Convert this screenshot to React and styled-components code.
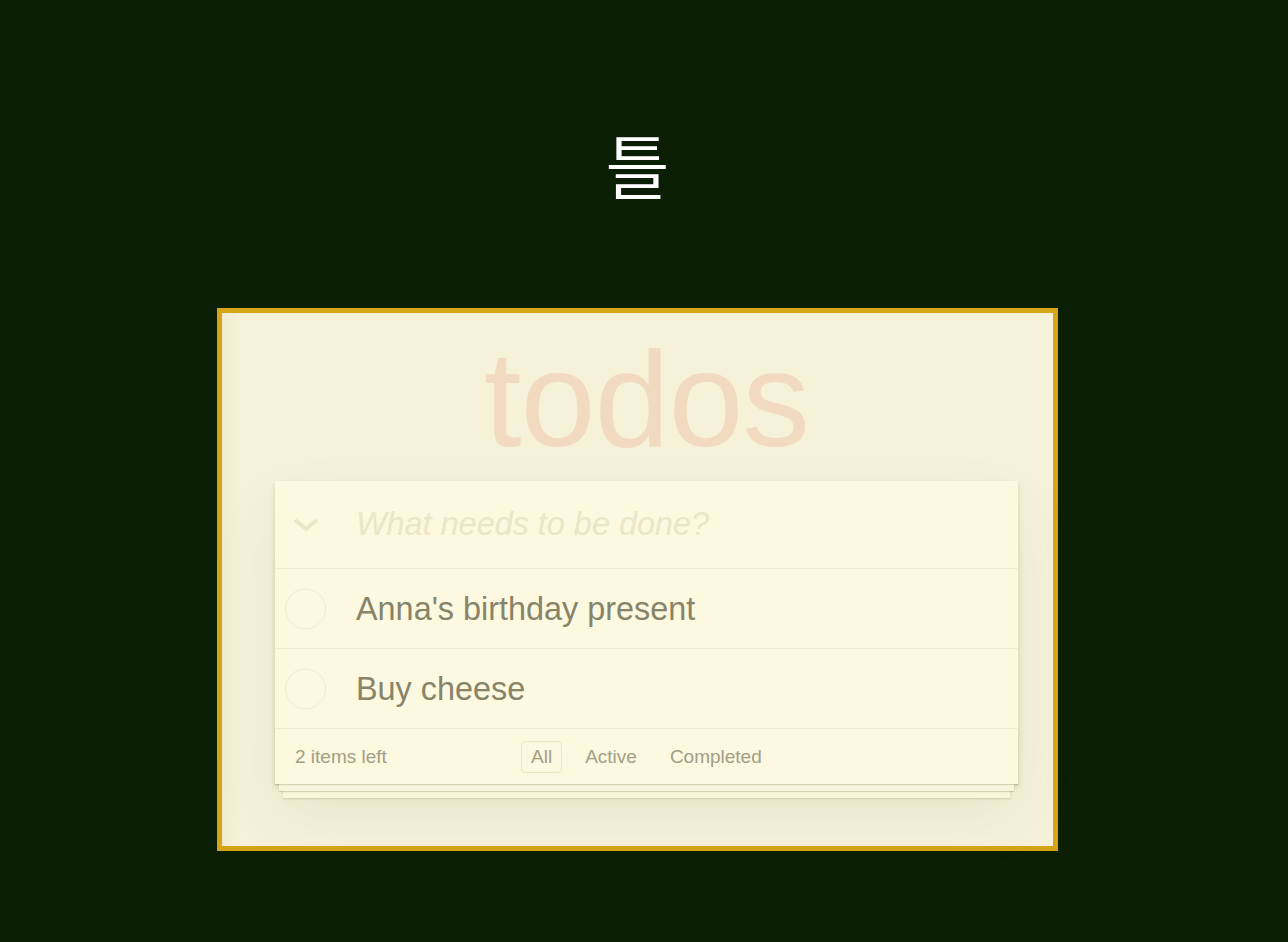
import React from 'react';
import styled, { createGlobalStyle } from 'styled-components';

const GlobalStyle = createGlobalStyle`
  html, body {
    margin: 0;
    padding: 0;
    background: #0b1f06;
  }
  body {
    font-family: "Liberation Sans", Arial, sans-serif;
  }
`;

const Page = styled.div`
  min-height: 942px;
  box-sizing: border-box;
  padding-right: 13px;
  display: flex;
  flex-direction: column;
  align-items: center;
`;

const Title = styled.div`
  margin-top: 116px;
  height: 98px;
  font-family: "Noto Sans CJK KR", "Noto Sans", sans-serif;
  font-size: 70px;
  line-height: 96px;
  font-weight: 350;
  color: #ffffff;
`;

const Frame = styled.div`
  margin-top: 94px;
  width: 841px;
  box-sizing: border-box;
  border: 5px solid #d6a517;
  background: #f6f2da;
  box-shadow: inset 14px 0 14px -10px rgba(120, 100, 40, 0.08);
  padding: 19px 35px 62px 53px;
`;

const Logo = styled.h1`
  margin: 0 0 14px;
  font-size: 135px;
  line-height: 135px;
  font-weight: 400;
  text-align: center;
  color: rgba(236, 198, 172, 0.55);
  letter-spacing: -1px;
`;

const Card = styled.section`
  position: relative;
  isolation: isolate;
  background: #fdf8e0;
  box-shadow: 0 3px 5px rgba(80, 70, 20, 0.18), 0 30px 60px rgba(80, 70, 20, 0.08);
`;

const Header = styled.div`
  position: relative;
  display: flex;
  align-items: center;
  height: 87px;
  padding-left: 81px;
  border-bottom: 1px solid #efead2;
`;

const ToggleAll = styled.span`
  position: absolute;
  left: 18px;
  top: 37px;
  width: 26px;
  height: 14px;
`;

const Placeholder = styled.span`
  font-size: 32.4px;
  font-style: italic;
  color: #ebe6c8;
`;

const Item = styled.div`
  position: relative;
  display: flex;
  align-items: center;
  box-sizing: border-box;
  height: 80px;
  padding-left: 81px;
  padding-top: 2px;
  border-bottom: 1px solid #efead2;
  font-size: 32.4px;
  color: #878469;
`;

const Check = styled.span`
  position: absolute;
  left: 10px;
  top: 50%;
  transform: translateY(-50%);
  width: 39px;
  height: 39px;
  border: 1px solid #efead3;
  border-radius: 50%;
`;

const Footer = styled.footer`
  position: relative;
  display: flex;
  align-items: center;
  height: 55px;
  padding: 0 20px;
  font-size: 19px;
  color: #a29f86;

  &::before {
    content: '';
    position: absolute;
    left: 0;
    right: 0;
    bottom: 0;
    height: 55px;
    overflow: hidden;
    z-index: -1;
    box-shadow: 0 1px 1px rgba(80, 70, 20, 0.2),
      0 11px 0 -4px #f9f4dc,
      0 12px 1px -4px rgba(80, 70, 20, 0.2),
      0 22px 0 -8px #f9f4dc,
      0 23px 2px -8px rgba(80, 70, 20, 0.2);
  }
`;

const Count = styled.span`
  flex: 0 0 auto;
`;

const Filters = styled.div`
  position: absolute;
  left: 246px;
  display: flex;
  gap: 13px;
`;

const Filter = styled.span`
  padding: 4px 9px;
  border: 1px solid ${p => (p.$selected ? '#f2e5c2' : 'transparent')};
  border-radius: 4px;
`;

function App() {
  return (
    <>
      <GlobalStyle />
      <Page>
        <Title>틀</Title>
        <Frame>
          <Logo>todos</Logo>
          <Card>
            <Header>
              <ToggleAll>
                <svg width="26" height="14" viewBox="0 0 26 14">
                  <path d="M2 2 L13 11 L24 2" fill="none" stroke="#ebe6c8" strokeWidth="4" />
                </svg>
              </ToggleAll>
              <Placeholder>What needs to be done?</Placeholder>
            </Header>
            <Item>
              <Check />
              Anna's birthday present
            </Item>
            <Item>
              <Check />
              Buy cheese
            </Item>
            <Footer>
              <Count>2 items left</Count>
              <Filters>
                <Filter $selected>All</Filter>
                <Filter>Active</Filter>
                <Filter>Completed</Filter>
              </Filters>
            </Footer>
          </Card>
        </Frame>
      </Page>
    </>
  );
}

export default App;
